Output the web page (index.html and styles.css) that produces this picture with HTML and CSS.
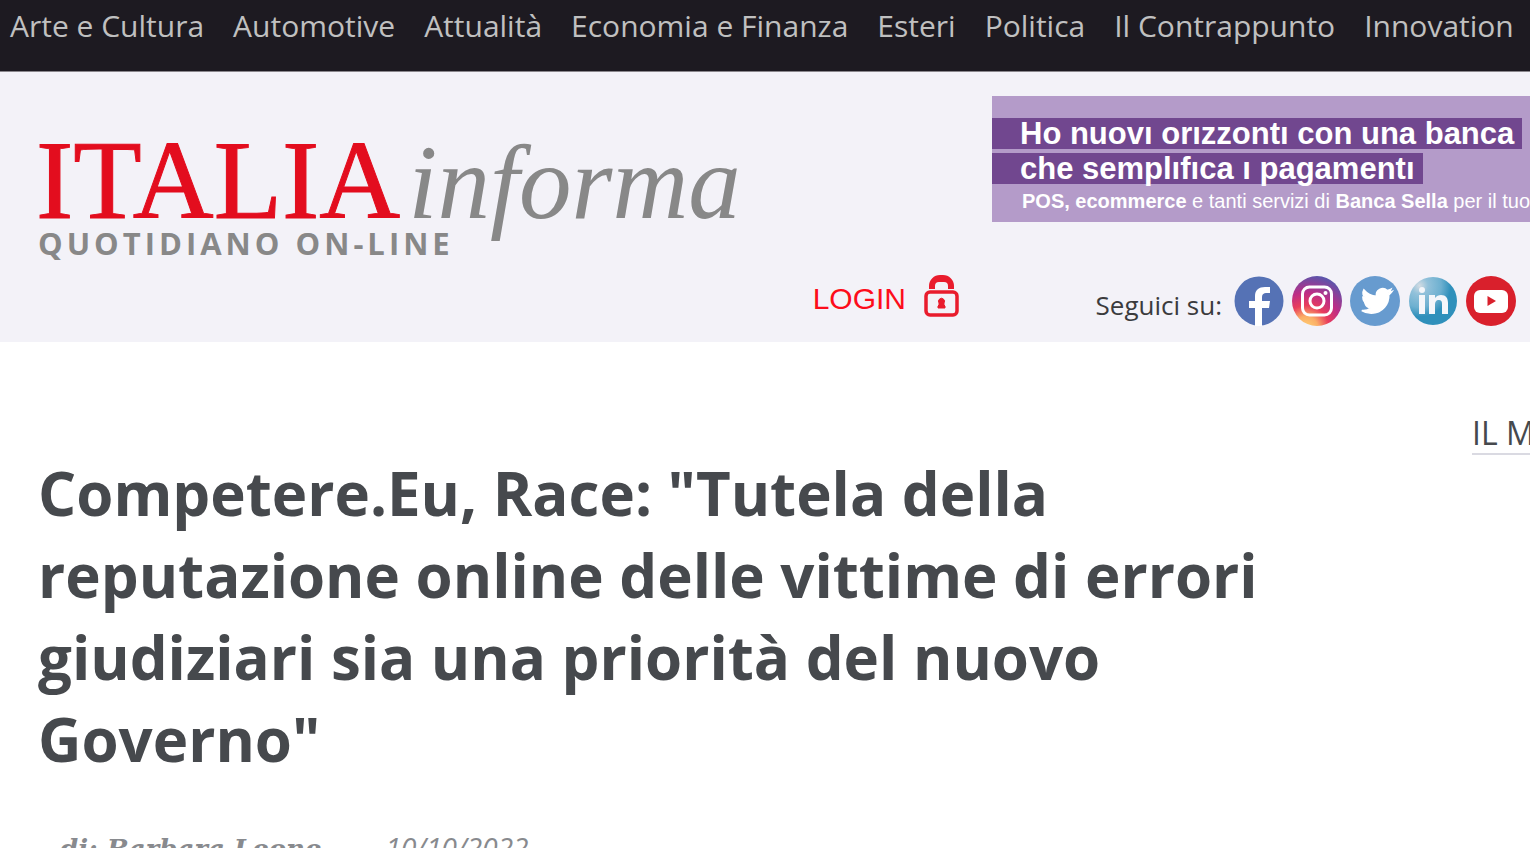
FILE: index.html
```html
<!DOCTYPE html>
<html lang="it">
<head>
    <meta charset="UTF-8">
    <meta name="viewport" content="width=device-width, initial-scale=1.0">
    <title>Italia Informa</title>
    <link rel="stylesheet" href="styles.css">
</head>
<body>
    <nav class="topnav">
        <a href="#">Arte e Cultura</a>
        <a href="#">Automotive</a>
        <a href="#">Attualità</a>
        <a href="#">Economia e Finanza</a>
        <a href="#">Esteri</a>
        <a href="#">Politica</a>
        <a href="#">Il Contrappunto</a>
        <a href="#">Innovation</a>
    </nav>

    <header class="header">
        <div class="header-left">
            <a href="#" class="logo">
                <span class="logo-name"><span class="logo-italia">ITALIA</span><span class="logo-informa">informa</span></span>
                <span class="logo-sub">QUOTIDIANO ON-LINE</span>
            </a>
            <a href="#" class="login">
                LOGIN
                <svg width="36" height="44" viewBox="0 0 36 44">
                    <path d="M5 15v-3a11 11 0 0 1 11-11h3a11 11 0 0 1 11 11v3h-6v-3a4 4 0 0 0-4-4h-5a4 4 0 0 0-4 4v3z" fill="#e91c2d"/>
                    <rect x="2" y="18" width="31" height="23" rx="4" fill="none" stroke="#e91c2d" stroke-width="3.500"/>
                    <path d="M14 34v-2l1-1v-2a3 3 0 1 1 5 0v2l1 1v2z" fill="#e91c2d" stroke="#e91c2d"/>
                </svg>
            </a>
        </div>

        <div class="header-right">
            <a href="#" class="banner">
                <span class="banner-line">Ho nuovı orızzontı con una banca</span>
                <span class="banner-line">che semplıfıca ı pagamentı</span>
                <span class="banner-text"><b>POS, ecommerce</b> e tanti servizi di <b>Banca Sella</b> per il tuo</span>
            </a>
            <div class="social">
                <span class="social-label">Seguici su:</span>
                <a href="#" aria-label="Facebook">
                    <svg width="50" height="50" viewBox="0 0 50 50">
                        <circle cx="25" cy="25" r="24.500" fill="#5572b5"/>
                        <path d="M21 50V32h-6v-7h6v-5c0-6 4-9 10-9h5v6h-4c-2 0-4 1-4 4v4h8l-1 7h-7v18z" fill="#fff"/>
                    </svg>
                </a>
                <a href="#" aria-label="Instagram">
                    <svg width="50" height="50" viewBox="0 0 50 50">
                        <defs>
                            <radialGradient id="insta" cx=".28" cy="1.05" r="1.1">
                                <stop offset="0" stop-color="#ffd374"/>
                                <stop offset=".22" stop-color="#fbae66"/>
                                <stop offset=".42" stop-color="#e93d5c"/>
                                <stop offset=".65" stop-color="#bd2d86"/>
                                <stop offset="1" stop-color="#5557ad"/>
                            </radialGradient>
                        </defs>
                        <circle cx="25" cy="25" r="25" fill="url(#insta)"/>
                        <rect x="10.500" y="11" width="29" height="28" rx="7" fill="none" stroke="#fff" stroke-width="3"/>
                        <circle cx="25" cy="25" r="7" fill="none" stroke="#fff" stroke-width="3"/>
                        <circle cx="33.500" cy="17" r="2" fill="#fff"/>
                    </svg>
                </a>
                <a href="#" aria-label="Twitter">
                    <svg width="50" height="50" viewBox="0 0 50 50">
                        <circle cx="25" cy="25" r="25" fill="#679bcf"/>
                        <path d="M42 15.500c-1.200.5-2.300.9-3.600 1 1.300-.8 2.200-2 2.700-3.400-1.200.7-2.500 1.200-3.900 1.500a6.200 6.200 0 0 0-10.600 5.700c-5.200-.3-9.700-2.700-12.800-6.500a6.200 6.200 0 0 0 1.900 8.300c-1 0-2-.3-2.800-.8 0 3 2.100 5.600 5 6.200-.9.200-1.900.3-2.800.1.800 2.500 3.100 4.200 5.800 4.300a12.500 12.500 0 0 1-9.100 2.600c2.700 1.700 6 2.800 9.500 2.800 11.500 0 17.900-9.700 17.500-18.500 1.200-.9 2.300-2 3.200-3.300z" fill="#fff" stroke="#fff" stroke-width="1.500"/>
                    </svg>
                </a>
                <a href="#" aria-label="LinkedIn">
                    <svg width="50" height="50" viewBox="0 0 50 50">
                        <defs>
                            <radialGradient id="linkedin" cx=".22" cy=".18" r=".9">
                                <stop offset="0" stop-color="#d3dce3"/>
                                <stop offset=".2" stop-color="#92c1da"/>
                                <stop offset=".5" stop-color="#6db0d0"/>
                                <stop offset=".72" stop-color="#2f90bb"/>
                                <stop offset="1" stop-color="#2f90bb"/>
                            </radialGradient>
                        </defs>
                        <circle cx="25" cy="25" r="24" fill="url(#linkedin)"/>
                        <g fill="#f4f6fa">
                            <circle cx="14" cy="14" r="3"/>
                            <rect x="11" y="19" width="6" height="19"/>
                            <path d="M21 38V19h6v3c1.500-2 3.500-3 6-3 5 0 7 3 7 8v11h-6V28c0-3-1-4-3-4-3 0-4 2-4 5v9z"/>
                        </g>
                    </svg>
                </a>
                <a href="#" aria-label="YouTube">
                    <svg width="50" height="50" viewBox="0 0 50 50">
                        <circle cx="25" cy="25" r="25" fill="#d9202c"/>
                        <rect x="8" y="14" width="34" height="23" rx="6" fill="#fff"/>
                        <path d="M21.500 20v10l8.500-5z" fill="#d9202c"/>
                    </svg>
                </a>
            </div>
        </div>
    </header>

    <main class="content">
        <article class="article">
            <h1>Competere.Eu, Race: "Tutela della reputazione online delle vittime di errori giudiziari sia una priorità del nuovo Governo"</h1>
            <p class="byline">
                <span class="author">di: Barbara Leone</span>
                <time datetime="2022-10-10">10/10/2022</time>
            </p>
        </article>
        <aside class="sidebar">
            <h2>IL M</h2>
        </aside>
    </main>
</body>
</html>
```
FILE: styles.css
```css
body {
    margin: 0;
    font-family: "Open Sans", sans-serif;
    color: #46494d;
    background-color: #fff;
    overflow: hidden;
}

a {
    color: inherit;
    text-decoration: none;
}

.topnav {
    display: flex;
    gap: 29px;
    height: 71px;
    padding-left: 10px;
    background-color: #1d1a21;
    border-bottom: 1px solid #8a878d;
    color: #c0c0c0;
    font-size: 30px;
    line-height: 52px;
    white-space: nowrap;
}

.header {
    display: flex;
    justify-content: space-between;
    height: 270px;
    background-color: #f3f2f8;
}

.header-left {
    display: flex;
    flex: 1;
    justify-content: space-between;
    padding: 46px 32px 0 36px;
}

.logo {
    display: flex;
    flex-direction: column;
    white-space: nowrap;
}

.logo-name {
    display: flex;
    align-items: baseline;
    gap: 8px;
    height: 109px;
    line-height: 124px;
    font-family: "Liberation Serif", serif;
}

.logo-italia {
    font-size: 112px;
    color: #e30d1e;
    -webkit-text-stroke: 1px #e30d1e;
}

.logo-informa {
    font-size: 105px;
    font-style: italic;
    color: #888;
}

.logo-sub {
    padding-left: 2px;
    font-size: 31px;
    line-height: 32px;
    font-weight: 700;
    letter-spacing: 4px;
    color: #888;
}

.login {
    display: flex;
    align-items: flex-start;
    align-self: flex-end;
    gap: 18px;
    margin-bottom: 19px;
    font-family: "Liberation Sans", sans-serif;
    font-size: 30px;
    line-height: 49px;
    color: #fd0d1b;
}

.header-right {
    width: 538px;
    padding-top: 24px;
}

.banner {
    display: flex;
    flex-direction: column;
    align-items: flex-start;
    gap: 4px;
    height: 104px;
    padding-top: 22px;
    background-color: #b49bc9;
    color: #fff;
    font-family: "Liberation Sans", sans-serif;
    white-space: nowrap;
    overflow: hidden;
}

.banner-line {
    padding: 0 8px 0 28px;
    background-color: #71478f;
    font-size: 31px;
    line-height: 31px;
    font-weight: 700;
}

.banner-text {
    padding-left: 30px;
    font-size: 20px;
    line-height: 26px;
}

.social {
    display: flex;
    align-items: center;
    justify-content: flex-end;
    gap: 8px;
    padding: 54px 14px 0 0;
}

.social a,
.social svg {
    display: block;
}

.social-label {
    margin-right: 4px;
    padding-top: 7px;
    font-size: 26px;
    color: #3b3b3d;
}

.content {
    display: flex;
    justify-content: space-between;
    padding-left: 38px;
}

.article {
    width: 85%;
    padding-top: 110px;
}

h1 {
    margin: 0;
    font-size: 60px;
    line-height: 82px;
    font-weight: 700;
}

.byline {
    display: flex;
    align-items: baseline;
    gap: 64px;
    margin: 47px 0 0;
    padding-left: 22px;
    color: #888a8e;
    font-style: italic;
    font-size: 28px;
    line-height: 40px;
}

.author {
    font-family: "DejaVu Serif", serif;
    font-size: 26px;
    font-weight: 700;
}

.sidebar {
    width: 58px;
    padding-top: 70px;
}

.sidebar h2 {
    margin: 0;
    border-bottom: 2px solid #dadae2;
    font-size: 32px;
    line-height: 41px;
    font-weight: 400;
    white-space: nowrap;
}
```
